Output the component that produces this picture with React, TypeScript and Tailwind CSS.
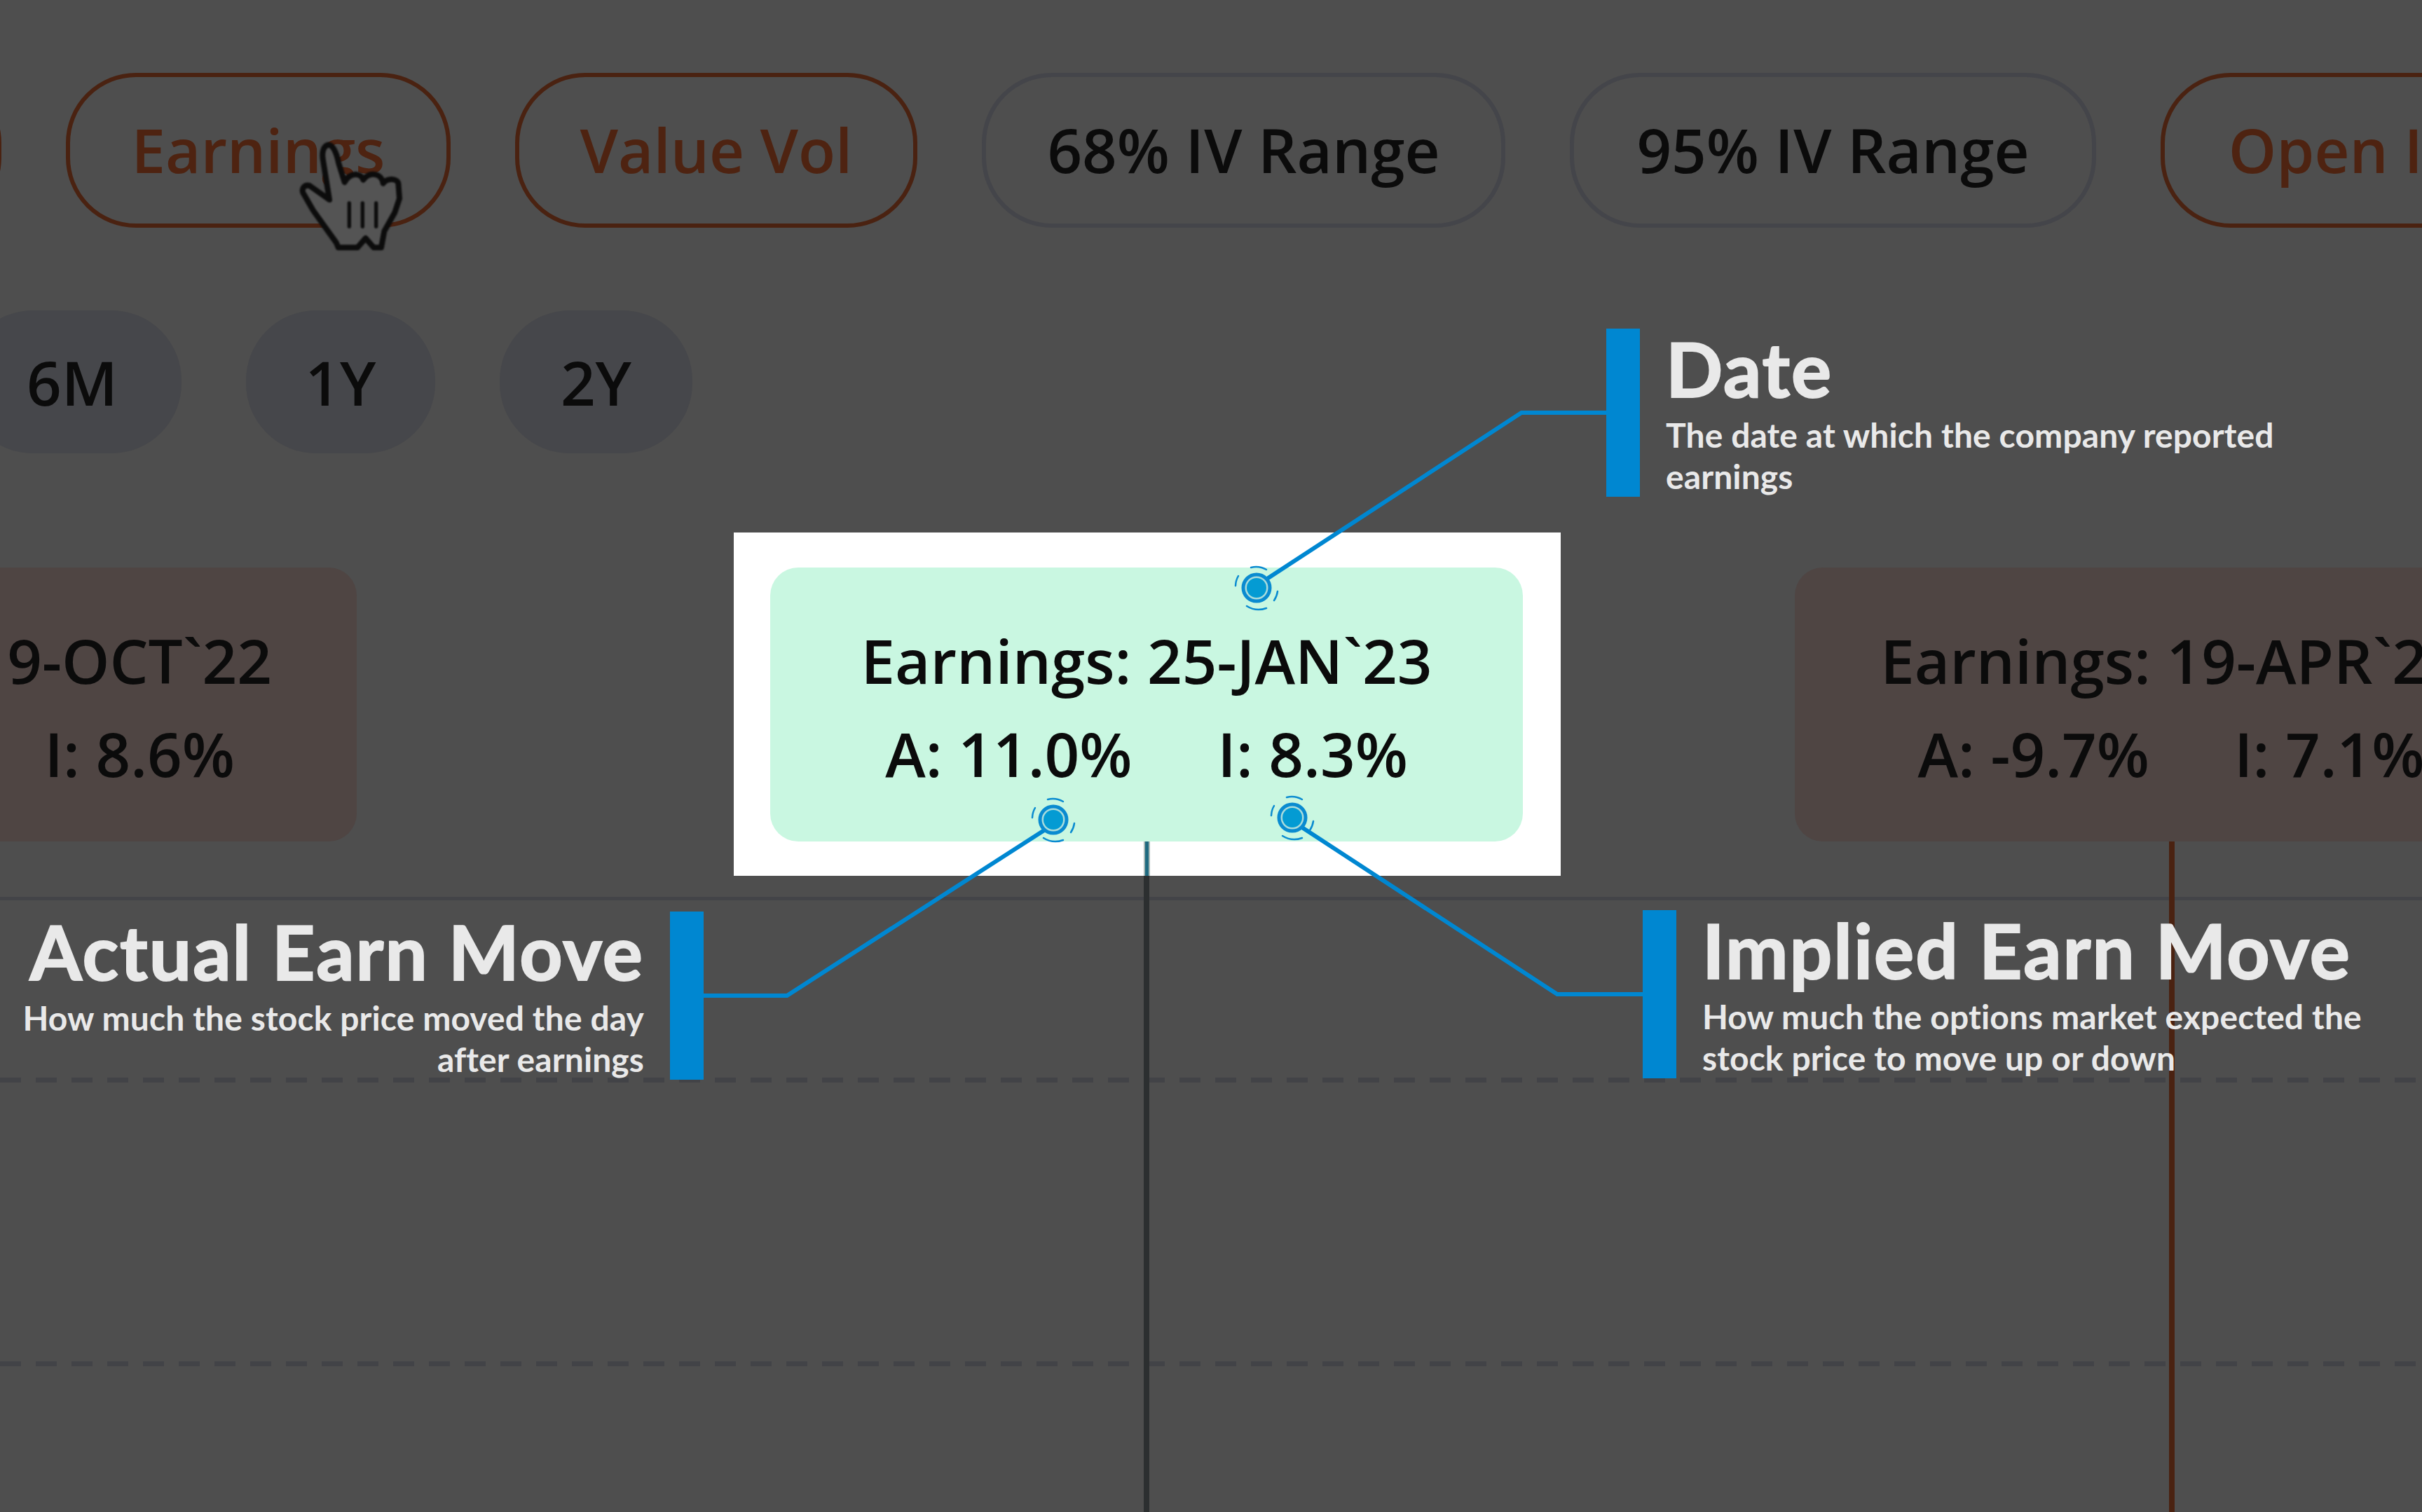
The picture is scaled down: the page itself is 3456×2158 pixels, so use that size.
const orange = 'border-[#4a2211] text-[#4e2311]'
const grey = 'border-[#44454a] text-[#0b0b0b]'

const filters = [
  { label: '', w: 'w-[400px]', tone: orange },
  { label: 'Earnings', w: 'w-[549px]', tone: orange },
  { label: 'Value Vol', w: 'w-[574px]', tone: orange },
  { label: '68% IV Range', w: 'w-[747px]', tone: grey },
  { label: '95% IV Range', w: 'w-[751px]', tone: grey },
  { label: 'Open Interest', w: 'w-[775px]', tone: orange },
]

const ranges = [
  { label: '6M', w: 'w-[312px]' },
  { label: '1Y', w: 'w-[270px]' },
  { label: '2Y', w: 'w-[275px]' },
]

function Dot({ x, y }: { x: number; y: number }) {
  return (
    <g transform={`translate(${x} ${y})`}>
      <circle r="19" fill="#a9dcdc" stroke="#0a8bd0" strokeWidth="5" />
      <circle r="14" fill="#049bd3" />
      <g fill="none" stroke="#0a8bd0" strokeWidth="2.5" strokeLinecap="round">
        <path d="M-8 -29A30 30 0 0 1 14 -26" />
        <path d="M30 5A30 30 0 0 1 25 18" />
        <path d="M14 29A32 32 0 0 1 -14 26" />
        <path d="M-30 -3A30 30 0 0 1 -26 -17" />
      </g>
    </g>
  )
}

function Hand() {
  return (
    <svg width="200" height="190" viewBox="0 0 600 570" className="absolute left-[400px] top-[190px] blur-[1px]">
      <path
        d="M205 50C185 55 178 80 182 110L210 285L125 225C105 220 90 235 97 255L140 330L190 400L240 470L248 490H330L365 450L400 490H432L445 420L490 340L510 280L505 215C500 195 460 190 440 215C435 175 385 160 355 200C345 170 300 165 275 210L250 130C240 80 225 50 205 50Z"
        fill="#545454"
        stroke="#0c0c0c"
        strokeWidth="24"
        strokeLinejoin="round"
      />
      <path d="M295 300V400M352 300V400M410 300V400" stroke="#0c0c0c" strokeWidth="16" strokeLinecap="round" fill="none" />
    </svg>
  )
}

function Callout({
  title,
  lines,
  align,
  pos,
}: {
  title: string
  lines: string[]
  align: 'left' | 'right'
  pos: string
}) {
  const bar = <div className="h-[240px] w-[48px] shrink-0 bg-[#0087d1]" />
  const text = (
    <div className={`font-['Lato',sans-serif] text-[#e9e9e9] ${align === 'right' ? 'text-right' : 'text-left'}`}>
      <div className="-mt-[2px] text-[107px] font-bold leading-[118px] tracking-[2px] whitespace-nowrap [-webkit-text-stroke:2px_#e9e9e9]">
        {title}
      </div>
      <div className="mt-[6px] text-[48px] font-bold leading-[59px] tracking-[0.1px] whitespace-nowrap">
        {lines.map((l) => (
          <div key={l}>{l}</div>
        ))}
      </div>
    </div>
  )
  return (
    <div className={`absolute flex items-start gap-[37px] ${pos}`}>
      {align === 'right' ? text : bar}
      {align === 'right' ? bar : text}
    </div>
  )
}

export default function App() {
  return (
    <div className="relative h-[2158px] w-[3456px] overflow-hidden bg-[#4e4e4e] font-['Open_Sans',sans-serif] text-[87px] font-semibold text-[#0b0b0b]">
      {/* filter pills */}
      <div className="ml-[-398px] flex gap-[92px] pt-[104px] blur-[0.7px]">
        {filters.map((f, i) => (
          <div
            key={i}
            className={`flex h-[221px] shrink-0 items-center justify-center rounded-[100px] border-[6px] pb-[2px] whitespace-nowrap ${f.w} ${f.tone}`}
          >
            {f.label}
          </div>
        ))}
      </div>

      {/* time range */}
      <div className="ml-[-53px] mt-[118px] flex gap-[92px] blur-[0.7px]">
        {ranges.map((r) => (
          <div key={r.label} className={`flex h-[204px] items-center justify-center rounded-[100px] bg-[#46474b] ${r.w}`}>
            {r.label}
          </div>
        ))}
      </div>

      {/* earnings cards */}
      <div className="relative z-10 ml-[-565px] mt-[113px] flex items-start">
        <div className="mt-[50px] flex h-[391px] w-[1074px] shrink-0 flex-col items-end justify-center gap-[33px] rounded-[40px] bg-[#4f4543] pt-[5px] blur-[0.7px]">
          <div className="pr-[121px] leading-[100px] whitespace-nowrap">Earnings: 19-OCT`22</div>
          <div className="pr-[174px] leading-[100px]">I: 8.6%</div>
        </div>

        <div className="relative ml-[538px] w-[1180px] shrink-0 bg-white pb-[49px] pl-[52px] pr-[54px] pt-[50px]">
          <div className="flex h-[391px] flex-col items-center justify-center gap-[33px] rounded-[40px] bg-[#c9f7e1] pt-[5px]">
            <div className="leading-[100px] whitespace-nowrap">Earnings: 25-JAN`23</div>
            <div className="flex gap-[122px] leading-[100px]">
              <span>A: 11.0%</span>
              <span>I: 8.3%</span>
            </div>
          </div>
          <div className="absolute bottom-0 left-[585px] h-[49px] w-[9px] border-x-2 border-x-[#a8b8b6] bg-[#1f6a80]" />
        </div>

        <div className="ml-[334px] mt-[50px] flex h-[391px] w-[1074px] shrink-0 flex-col items-center justify-center gap-[33px] rounded-[40px] bg-[#4f4543] pt-[5px] blur-[0.7px]">
          <div className="leading-[100px] whitespace-nowrap">Earnings: 19-APR`23</div>
          <div className="flex gap-[121px] leading-[100px]">
            <span>A: -9.7%</span>
            <span>I: 7.1%</span>
          </div>
        </div>
      </div>

      {/* chart behind the callouts */}
      <div className="relative mt-[-49px] h-[957px]">
        <div className="pt-[79px] blur-[0.7px]">
          <div className="h-[5px] bg-[#434448]" />
          <div className="mt-[253px] h-[7px] bg-[repeating-linear-gradient(90deg,#424347_0,#424347_30px,transparent_30px,transparent_51px)]" />
          <div className="mt-[398px] h-[7px] bg-[repeating-linear-gradient(90deg,#424347_0,#424347_30px,transparent_30px,transparent_51px)]" />
        </div>
        <div className="absolute bottom-0 left-[1632px] top-[49px] w-[8px] bg-[#2c2f30]" />
        <div className="absolute bottom-0 left-[3095px] top-0 w-[8px] bg-[#4a2211]" />
      </div>

      <Hand />

      {/* annotation leaders */}
      <svg viewBox="0 0 3456 2158" className="absolute inset-0 z-20 h-full w-full" fill="none">
        <g stroke="#0087d1" strokeWidth="6">
          <path d="M2292 589H2171L1805 828" />
          <path d="M1004 1421H1123L1490 1185" />
          <path d="M2344 1419H2222L1858 1181" />
        </g>
        <Dot x={1793} y={839} />
        <Dot x={1503} y={1170} />
        <Dot x={1844} y={1167} />
      </svg>

      <Callout
        title="Date"
        lines={['The date at which the company reported', 'earnings']}
        align="left"
        pos="left-[2292px] top-[469px]"
      />
      <Callout
        title="Actual Earn Move"
        lines={['How much the stock price moved the day', 'after earnings']}
        align="right"
        pos="right-[2452px] top-[1301px]"
      />
      <Callout
        title="Implied Earn Move"
        lines={['How much the options market expected the', 'stock price to move up or down']}
        align="left"
        pos="left-[2344px] top-[1299px]"
      />
    </div>
  )
}
